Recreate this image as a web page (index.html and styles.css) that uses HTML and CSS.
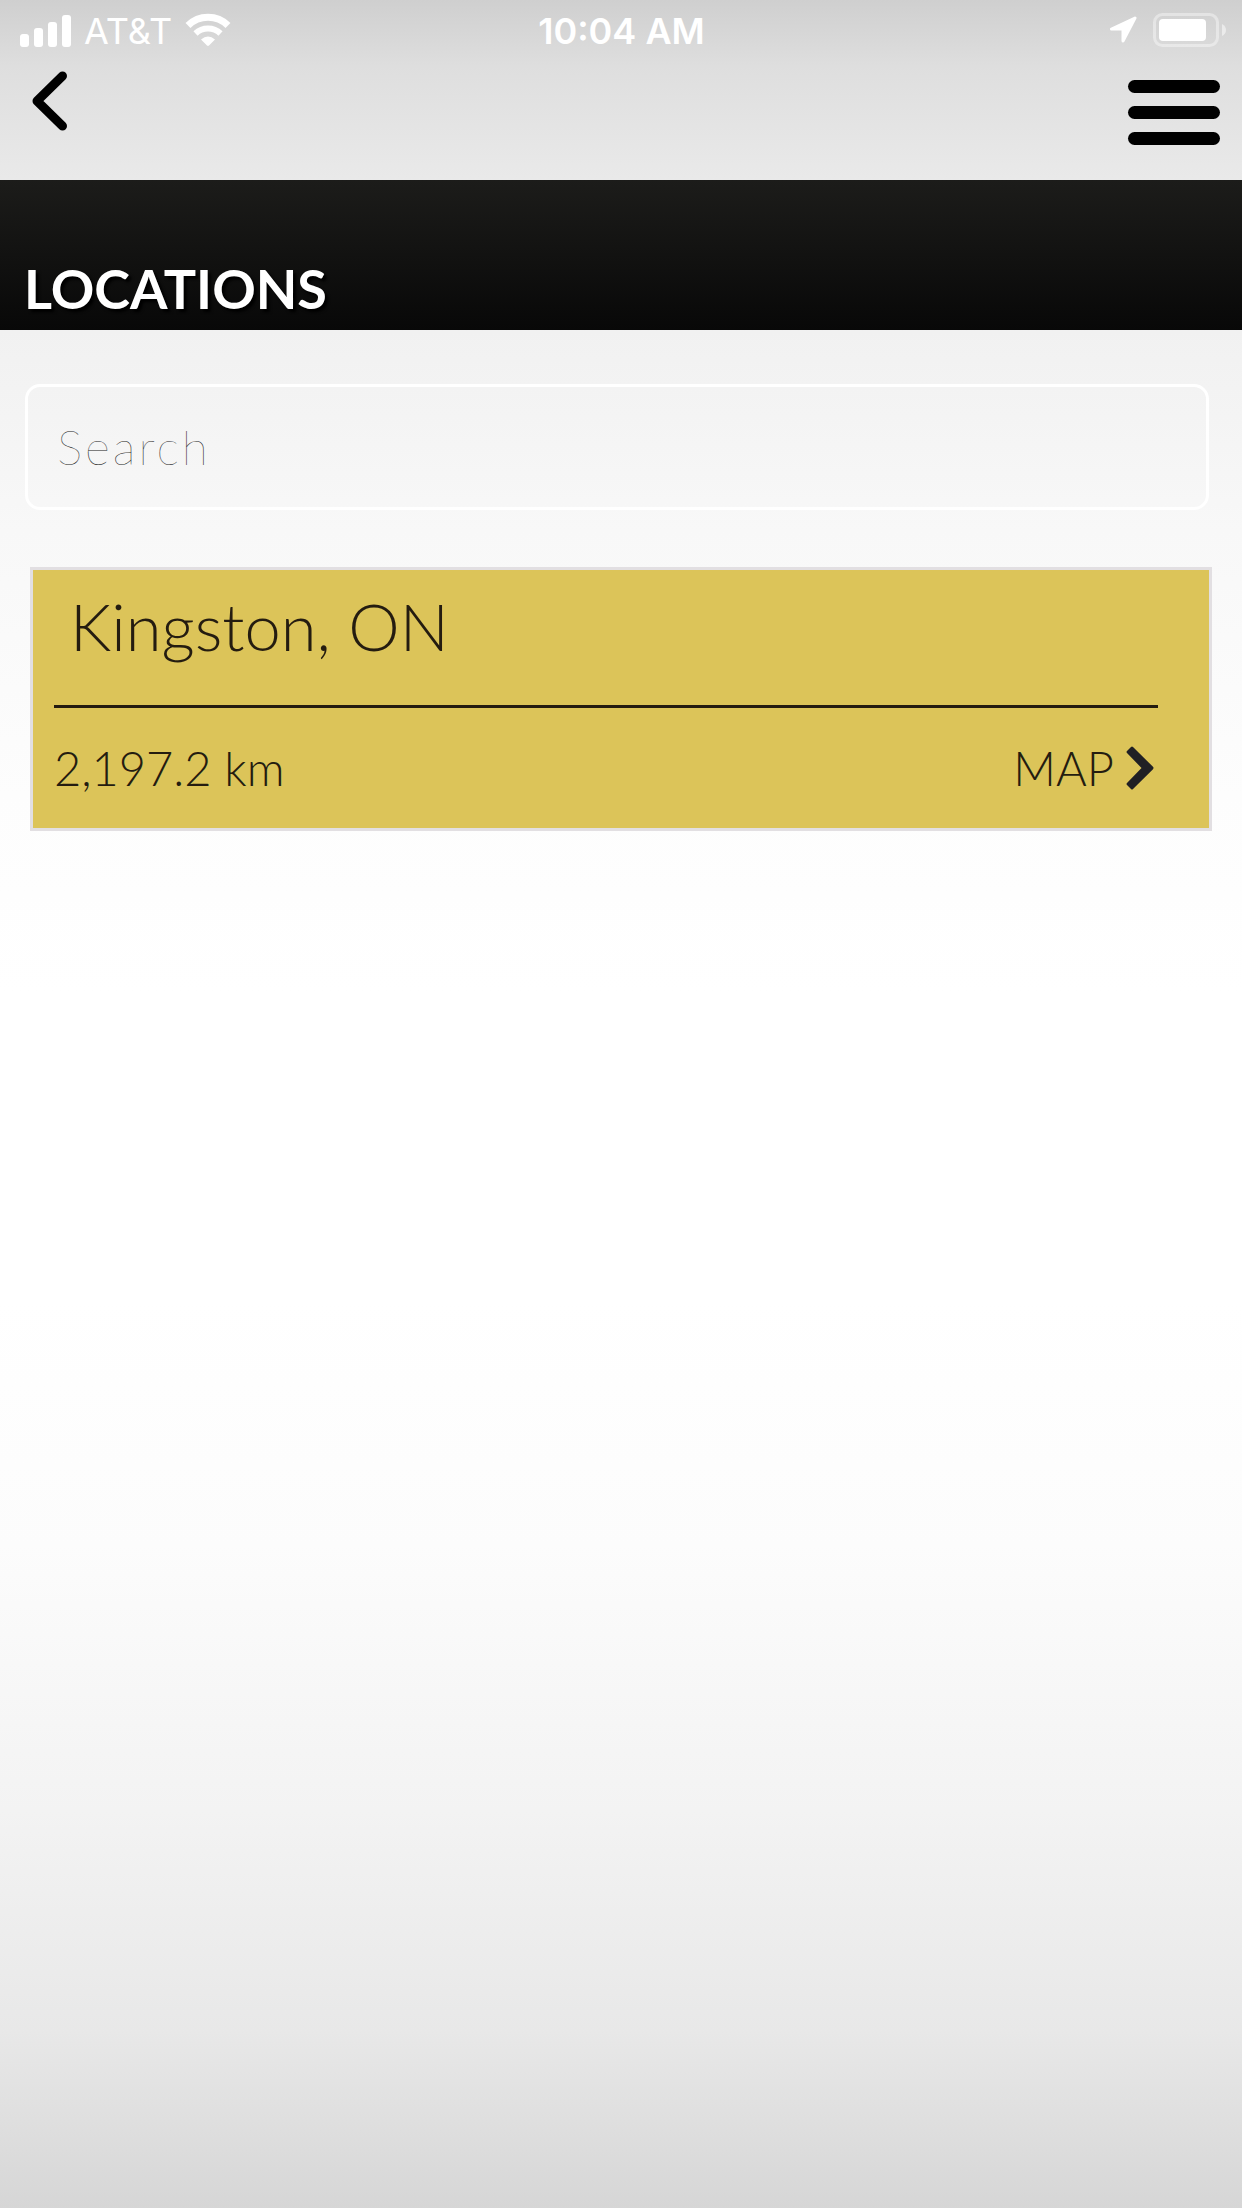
FILE: index.html
```html
<!DOCTYPE html>
<html lang="en">
<head>
<meta charset="utf-8">
<meta name="viewport" content="width=device-width, initial-scale=1">
<title>Locations</title>
<link rel="stylesheet" href="styles.css">
</head>
<body>
<header class="top">
  <div class="status">
    <div class="status-side">
      <svg class="signal" width="51" height="33" viewBox="0 0 51 33" fill="#fff" role="img" aria-label="Signal strength">
        <rect x="0" y="20" width="9" height="13" rx="3"/>
        <rect x="14" y="14" width="9" height="19" rx="3"/>
        <rect x="28" y="8" width="9" height="25" rx="3"/>
        <rect x="42" y="1" width="9" height="32" rx="3"/>
      </svg>
      <span class="carrier">AT&amp;T</span>
      <svg width="46" height="34" viewBox="0 0 46 34" role="img" aria-label="Wi-Fi">
        <path d="M3 12.500A28.500 28.500 0 0 1 43 12.500" fill="none" stroke="#fff" stroke-width="7"/>
        <path d="M10.500 20.500A18 18 0 0 1 35.500 20.500" fill="none" stroke="#fff" stroke-width="6"/>
        <path d="M16 26.500Q23 20.500 30 26.500L24 32.600Q23 33.500 22 32.600Z" fill="#fff"/>
      </svg>
    </div>
    <time class="clock">10:04 AM</time>
    <div class="status-side status-end">
      <svg width="28" height="28" viewBox="0 0 28 28" role="img" aria-label="Location in use">
        <path d="M26 2L2.500 13H14V25Z" fill="#fff" stroke="#fff" stroke-width="3" stroke-linejoin="round"/>
      </svg>
      <svg width="74" height="34" viewBox="0 0 74 34" role="img" aria-label="Battery">
        <rect x="1.500" y="1.500" width="63" height="31" rx="8" fill="none" stroke="#fff" stroke-opacity=".4" stroke-width="3"/>
        <rect x="6" y="6" width="47" height="22" rx="4" fill="#fff"/>
        <path d="M69 11Q73 13 73 17T69 23Z" fill="#fff" fill-opacity=".5"/>
      </svg>
    </div>
  </div>
  <nav class="nav">
    <button class="icon-button" type="button" aria-label="Back">
      <svg width="36" height="60" viewBox="0 0 36 60"><path d="M30.500 5L5 30 30.500 55" fill="none" stroke="#000" stroke-width="9" stroke-linecap="round" stroke-linejoin="round"/></svg>
    </button>
    <button class="icon-button menu" type="button" aria-label="Menu">
      <span class="bar"></span><span class="bar"></span><span class="bar"></span>
    </button>
  </nav>
</header>
<div class="title-bar"><h1 class="title">LOCATIONS</h1></div>
<main class="content">
  <input class="search" type="search" placeholder="Search" aria-label="Search">
  <article class="card">
    <h2 class="place">Kingston, ON</h2>
    <div class="details">
      <span>2,197.2 km</span>
      <a class="map" href="#map">MAP
        <svg width="28" height="44" viewBox="0 0 28 44" aria-hidden="true"><path d="M7 1L27 20.800Q28 22 27 23.200L7 43Q6 44 5 43L1 39Q0 38 1 37L15.500 22 1 7Q0 6 1 5L5 1Q6 0 7 1Z" fill="#202024"/></svg>
      </a>
    </div>
  </article>
</main>
</body>
</html>
```
FILE: styles.css
```css
* {
  box-sizing: border-box;
}

body {
  margin: 0;
  min-height: 100vh;
  font-family: Lato, "Liberation Sans", sans-serif;
  font-weight: 300;
  color: #241c10;
  background: linear-gradient(#cfcfcf, #dedede 3%, #e9e9e9 8%, #f1f1f1 15%, #f8f8f8 24%, #fdfdfd 36%, #fff 45%, #fff 59%, #fcfcfc 70%, #f3f3f3 82%, #e8e8e8 92%, #d6d6d6);
}

.top {
  height: 180px;
}

.status {
  display: grid;
  grid-template-columns: 1fr auto 1fr;
  align-items: center;
  height: 60px;
  padding: 0 15px 0 20px;
  font-family: Inter, "Liberation Sans", sans-serif;
  font-size: 36px;
  line-height: 40px;
  color: #fff;
}

.status-side {
  display: flex;
  align-items: center;
  gap: 13px;
}

.status-end {
  justify-content: flex-end;
  gap: 16px;
}

.carrier,
.clock {
  padding-top: 2px;
}

.carrier {
  font-weight: 400;
}

.clock {
  padding-right: 4px;
  font-weight: 600;
}

.nav {
  display: flex;
  justify-content: space-between;
  align-items: flex-start;
  padding: 11px 22px 0 32px;
}

.icon-button {
  display: flex;
  padding: 0;
  border: 0;
  background: none;
}

.menu {
  flex-direction: column;
  gap: 13px;
  width: 92px;
  padding-top: 9px;
}

.bar {
  width: 100%;
  height: 13px;
  border-radius: 7px;
  background: #000;
}

.title-bar {
  display: flex;
  align-items: flex-end;
  height: 150px;
  padding: 0 24px 9px;
  background: linear-gradient(#1c1c1a, #080808);
}

.title {
  margin: 0;
  font-size: 54px;
  line-height: 64px;
  font-weight: 700;
  color: #fff;
  text-shadow: 3px 3px 3px #000;
}

.content {
  padding: 54px 30px;
}

.search {
  display: block;
  width: calc(100% + 2px);
  height: 126px;
  margin: 0 0 57px -5px;
  padding: 0 29px 2px;
  border: 3px solid #fff;
  border-radius: 15px;
  background: none;
  font: 100 48px/60px Lato, "Liberation Sans", sans-serif;
  letter-spacing: 3px;
  color: #222;
  appearance: none;
}

.search::placeholder {
  color: #222;
  opacity: 1;
}

.card {
  padding: 16px 51px 30px 21px;
  border: 3px solid #e2dfe2;
  background: #dcc459;
}

.place {
  margin: 0;
  padding: 0 16px 39px;
  border-bottom: 3px solid #241c10;
  font-size: 65px;
  line-height: 80px;
  font-weight: 300;
}

.details {
  display: flex;
  justify-content: space-between;
  align-items: center;
  padding-top: 30px;
  font-size: 47px;
  line-height: 60px;
}

.map {
  display: flex;
  align-items: center;
  gap: 12px;
  padding-right: 4px;
  color: inherit;
  text-decoration: none;
}
```
